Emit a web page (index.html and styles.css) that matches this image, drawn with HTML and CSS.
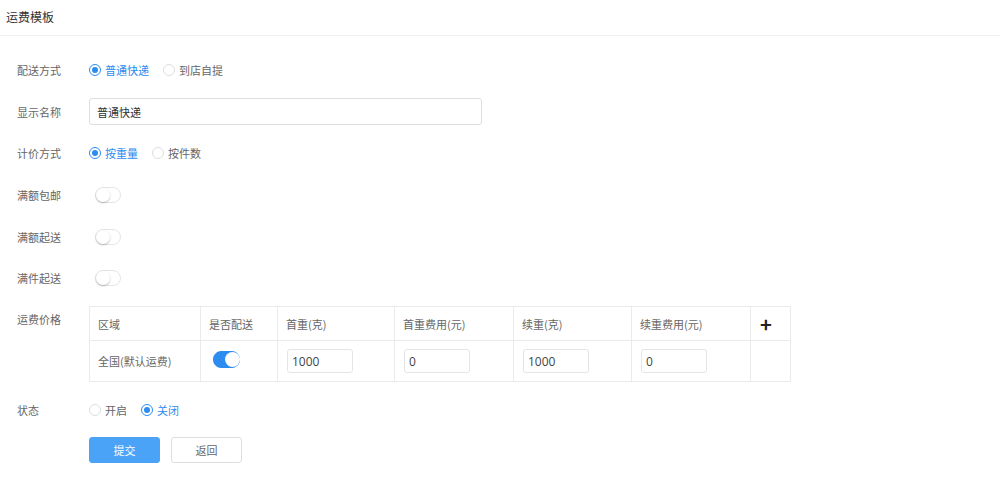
FILE: index.html
```html
<!DOCTYPE html>
<html lang="zh-CN">
<head>
    <meta charset="UTF-8">
    <meta name="viewport" content="width=device-width, initial-scale=1.0">
    <title>运费模板</title>
    <link rel="stylesheet" href="styles.css">
</head>
<body>
    <div class="titulo">运费模板</div>

    <div class="form">
        <div class="linha">
            <div class="rotulo">配送方式</div>
            <label class="radio on"><span class="bola"></span>普通快递</label>
            <label class="radio"><span class="bola"></span>到店自提</label>
        </div>
        <div class="linha">
            <div class="rotulo">显示名称</div>
            <input class="campo" type="text" value="普通快递">
        </div>
        <div class="linha">
            <div class="rotulo">计价方式</div>
            <label class="radio on"><span class="bola"></span>按重量</label>
            <label class="radio"><span class="bola"></span>按件数</label>
        </div>
        <div class="linha">
            <div class="rotulo">满额包邮</div>
            <span class="chave"></span>
        </div>
        <div class="linha">
            <div class="rotulo">满额起送</div>
            <span class="chave"></span>
        </div>
        <div class="linha">
            <div class="rotulo">满件起送</div>
            <span class="chave"></span>
        </div>

        <div class="linha-tabela">
            <div class="rotulo">运费价格</div>
            <table class="precos">
                <tr>
                    <th class="c1">区域</th>
                    <th class="c2">是否配送</th>
                    <th class="c3">首重(克)</th>
                    <th class="c4">首重费用(元)</th>
                    <th class="c5">续重(克)</th>
                    <th class="c6">续重费用(元)</th>
                    <th class="c7"><span class="mais">+</span></th>
                </tr>
                <tr>
                    <td class="regiao">全国(默认运费)</td>
                    <td><span class="chave ligada"></span></td>
                    <td><input class="mini" type="text" value="1000"></td>
                    <td><input class="mini" type="text" value="0"></td>
                    <td><input class="mini" type="text" value="1000"></td>
                    <td><input class="mini" type="text" value="0"></td>
                    <td></td>
                </tr>
            </table>
        </div>

        <div class="linha">
            <div class="rotulo">状态</div>
            <label class="radio"><span class="bola"></span>开启</label>
            <label class="radio on"><span class="bola"></span>关闭</label>
        </div>

        <div class="botoes">
            <button class="btn azul">提交</button>
            <button class="btn">返回</button>
        </div>
    </div>
</body>
</html>
```

FILE: styles.css
```css
* {
    box-sizing: border-box;
    font-family: "Noto Sans CJK SC", "Liberation Sans", sans-serif;
}
body {
    margin: 0;
    background: #fff;
    color: #666;
    font-size: 11px;
}
.titulo {
    height: 36px;
    line-height: 34px;
    padding-left: 6px;
    font-size: 12px;
    color: #333;
    border-bottom: 1px solid #eef0f3;
}
.form {
    padding: 13px 0 0 17px;
}
.linha {
    display: flex;
    align-items: center;
    height: 41.7px;
}
.rotulo {
    width: 72px;
    flex-shrink: 0;
    color: #666;
}
.radio {
    display: flex;
    align-items: center;
    margin-right: 14px;
    color: #666;
}
.radio .bola {
    width: 12px;
    height: 12px;
    border: 1px solid #dcdee2;
    border-radius: 50%;
    margin-right: 4px;
    display: flex;
    align-items: center;
    justify-content: center;
}
.radio.on {
    color: #2d8cf0;
}
.radio.on .bola {
    border-color: #2d8cf0;
}
.radio.on .bola::after {
    content: "";
    width: 6px;
    height: 6px;
    border-radius: 50%;
    background: #2d8cf0;
}
.campo {
    width: 393px;
    height: 27px;
    border: 1px solid #dcdee2;
    border-radius: 3px;
    padding: 0 7px;
    font-size: 11px;
    color: #333;
    outline: 0;
}
.chave {
    position: relative;
    display: inline-block;
    width: 26px;
    height: 16px;
    border: 1px solid #e3e5e8;
    border-radius: 8px;
    background: #fff;
    margin-left: 6px;
}
.chave::after {
    content: "";
    position: absolute;
    top: 0;
    left: 0;
    width: 14px;
    height: 14px;
    border-radius: 50%;
    background: #fff;
    box-shadow: 0 1px 2px rgba(0, 0, 0, 0.25);
}
.chave.ligada {
    width: 27px;
    height: 17px;
    border-color: #2d8cf0;
    background: #2d8cf0;
    margin-left: 3px;
}
.chave.ligada::after {
    left: 11px;
    width: 15px;
    height: 15px;
    box-shadow: none;
}
.linha-tabela {
    display: flex;
    align-items: flex-start;
    margin-top: 7px;
}
.linha-tabela .rotulo {
    line-height: 27px;
}
.precos {
    border-collapse: collapse;
    border: 1px solid #e8eaec;
}
.precos th,
.precos td {
    border: 1px solid #e8eaec;
    text-align: left;
    padding: 0 9px;
    color: #666;
    font-size: 11px;
}
.precos th {
    height: 34px;
    font-weight: normal;
    padding: 0 8px;
}
.precos td {
    height: 41px;
}
.precos td.regiao {
    padding: 0 8px;
}
.c1 { width: 111px; }
.c2 { width: 77px; }
.c3 { width: 117px; }
.c4 { width: 119px; }
.c5 { width: 118px; }
.c6 { width: 119px; }
.c7 { width: 40px; }
.mais {
    display: block;
    font-size: 20px;
    font-weight: bold;
    color: #222;
    line-height: 20px;
    padding-left: 1px;
}
.mini {
    width: 66px;
    height: 24px;
    border: 1px solid #e3e5e8;
    border-radius: 3px;
    padding: 0 4px;
    font-family: "Open Sans", "Liberation Sans", sans-serif;
    font-size: 12px;
    color: #444;
    outline: 0;
    display: block;
}
.linha-tabela + .linha {
    margin-top: 7px;
}
.botoes {
    display: flex;
    gap: 11px;
    margin: 6px 0 0 72px;
}
.btn {
    width: 71px;
    height: 26px;
    border: 1px solid #dcdee2;
    border-radius: 3px;
    background: #fff;
    color: #666;
    font-size: 11px;
    cursor: pointer;
}
.btn.azul {
    background: #4ba3f8;
    border-color: #4ba3f8;
    color: #fff;
}
```
